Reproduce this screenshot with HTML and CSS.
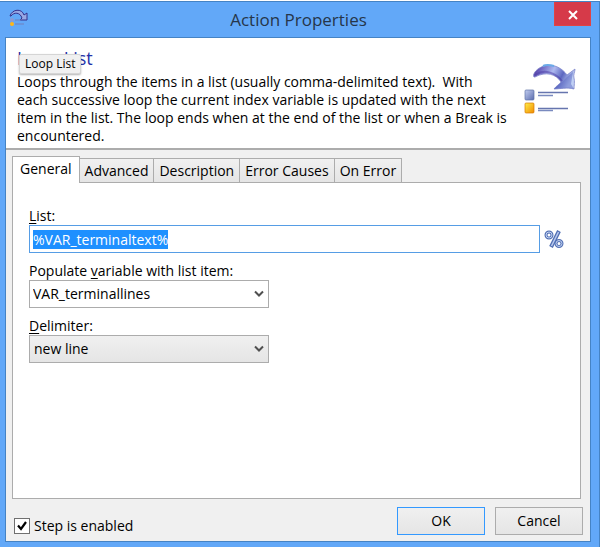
FILE: index.html
```
<!DOCTYPE html>
<html lang="en">
<head>
  <meta charset="UTF-8">
  <meta name="viewport" content="width=device-width, initial-scale=1.0">
  <title>Action Properties</title>
  <link rel="stylesheet" href="styles.css">
</head>
<body>
  <form class="window">
    <header class="titlebar">
      <svg class="title-icon" viewBox="0 0 20 20" aria-hidden="true">
        <path d="M1 8C3 1 13 0 15 7L18 5V12H11L13 10C11 4 5 4 2 8Z" fill="#98a8e4" stroke="#34308c"/>
        <circle cx="3" cy="12" r="2" fill="#8c9ad4"/>
        <circle cx="3" cy="16" r="2" fill="#ffb619"/>
        <path d="M6 12H12M6 16H15" stroke="#7080bd"/>
      </svg>
      <h1 class="title">Action Properties</h1>
      <button type="button" class="close" aria-label="Close">
        <svg viewBox="0 0 10 10" width="10" height="10"><path d="M1 1L9 9M9 1L1 9" stroke="#fff" stroke-width="2"/></svg>
      </button>
    </header>

    <main class="client">
      <section class="intro">
        <div class="intro-text">
          <h2 class="action-name">Loop List<span class="tooltip" role="tooltip">Loop List</span></h2>
          <p>Loops through the items in a list (usually comma-delimited text).&nbsp; With<br>
          each successive loop the current index variable is updated with the next<br>
          item in the list. The loop ends when at the end of the list or when a Break is<br>
          encountered.</p>
        </div>
        <svg class="loop-icon" viewBox="0 0 54 52" aria-hidden="true">
          <defs>
            <linearGradient id="arrow" x1="0" y1="0" x2="1" y2="0.3">
              <stop offset="0" stop-color="#44228e"/>
              <stop offset=".2" stop-color="#6c63c0"/>
              <stop offset=".5" stop-color="#aebaf0"/>
              <stop offset=".75" stop-color="#5c67c0"/>
              <stop offset="1" stop-color="#c0d0f4"/>
            </linearGradient>
            <linearGradient id="blueBox" x1="0" y1="0" x2="1" y2="1">
              <stop offset="0" stop-color="#c3cef0"/>
              <stop offset="1" stop-color="#5a6cae"/>
            </linearGradient>
            <linearGradient id="goldBox" x1="0" y1="0" x2="1" y2="1">
              <stop offset="0" stop-color="#fff04a"/>
              <stop offset="1" stop-color="#f08a00"/>
            </linearGradient>
          </defs>
          <path d="M10 13C8 10 13 4 20 2C30 -1 39 5 43 11L51 5C51 8 49 11 50 14C51 17 50 22 50 25C43 23 36 25 30 25C32 22 36 20 37 18C32 10 22 7 11 13Z" fill="url(#arrow)" stroke="#7f86cc" stroke-width=".8"/>
          <path d="M19 2C23 0 26 1 30 2" fill="none" stroke="#6aaae8" stroke-width="2"/>
          <path d="M11 11C20 5 31 8 38 17" fill="none" stroke="#4a3aa4" stroke-width="2" opacity=".5"/>
          <path d="M30 25L38 18L43 13L49 8L47 20L50 25C43 23 36 25 30 25Z" fill="#5b69c4" opacity=".5"/>
          <rect x="1" y="26" width="9" height="10" rx="1" fill="url(#blueBox)" stroke="#6072a8" stroke-width=".7"/>
          <rect x="1" y="39" width="9" height="10" rx="1" fill="url(#goldBox)" stroke="#d97900" stroke-width=".7"/>
          <path d="M14 28.500H44M14 44.500H44" stroke="#6675ae" stroke-width="1.300"/>
          <path d="M14 31.500H29M14 46.500H29" stroke="#7a8abf" stroke-width="1.300"/>
        </svg>
      </section>

      <section class="body">
        <div class="tabs" role="tablist">
          <button type="button" class="tab active" role="tab" aria-selected="true">General</button>
          <button type="button" class="tab" role="tab">Advanced</button>
          <button type="button" class="tab" role="tab">Description</button>
          <button type="button" class="tab" role="tab">Error Causes</button>
          <button type="button" class="tab" role="tab">On Error</button>
        </div>
        <div class="panel" role="tabpanel">
          <div class="field">
            <label for="list"><u>L</u>ist:</label>
            <div class="list-row">
              <input type="text" id="list" class="control list-input" value="%VAR_terminaltext%" autofocus>
              <button type="button" class="percent" aria-label="Insert variable">
                <svg viewBox="0 0 20 20" width="20" height="20" fill="none" stroke="#5270b4">
                  <path d="M15 2L7 18" stroke-width="4"/>
                  <path d="M14.500 3L7.500 17" stroke="#b9c9ee" stroke-width="1.500"/>
                  <circle cx="5" cy="6" r="3" stroke-width="3"/>
                  <circle cx="5" cy="6" r="3" stroke="#c3d2f2"/>
                  <circle cx="15" cy="14.500" r="3" stroke-width="3"/>
                  <circle cx="15" cy="14.500" r="3" stroke="#c3d2f2"/>
                </svg>
              </button>
            </div>
          </div>
          <div class="field">
            <label for="variable">Populate <u>v</u>ariable with list item:</label>
            <div class="combo">
              <select id="variable" class="control"><option>VAR_terminallines</option></select>
              <svg class="chevron" viewBox="0 0 10 8"><path d="M1 1.500L5 5.500L9 1.500" fill="none" stroke="#505050" stroke-width="2"/></svg>
            </div>
          </div>
          <div class="field">
            <label for="delimiter"><u>D</u>elimiter:</label>
            <div class="combo">
              <select id="delimiter" class="control drop-list"><option>new line</option></select>
              <svg class="chevron" viewBox="0 0 10 8"><path d="M1 1.500L5 5.500L9 1.500" fill="none" stroke="#505050" stroke-width="2"/></svg>
            </div>
          </div>
        </div>
      </section>

      <footer class="footer">
        <label class="enabled"><input type="checkbox" class="check" checked>Step is enabled</label>
        <button type="submit" class="btn btn-default">OK</button>
        <button type="button" class="btn">Cancel</button>
      </footer>
    </main>
  </form>

  <script>
    const list = document.getElementById('list');
    list.focus();
    list.select();
  </script>
</body>
</html>
```
FILE: styles.css
```
:root {
  --frame: #62a8f8;
  --frame-dark: #4583c4;
  --face: #f0f0f0;
  --line: #acacac;
  --focus: #569de5;
}

* {
  margin: 0;
  padding: 0;
  box-sizing: border-box;
}

body {
  min-height: 100vh;
  padding: 1px 2px 2px 0;
  display: flex;
  background: #fff;
  color: #000;
  font: 14px/18px "Open Sans", "Noto Sans", sans-serif;
}

button,
input,
select {
  font: inherit;
  color: inherit;
}

.window {
  flex: 1;
  display: flex;
  flex-direction: column;
  padding: 0 8px 5px 5px;
  background: var(--frame);
  border-top: 1px solid var(--frame-dark);
  border-right: 1px solid var(--frame-dark);
}

/* title bar */
.titlebar {
  height: 35px;
  display: flex;
  align-items: flex-start;
}

.title-icon {
  width: 20px;
  height: 20px;
  margin: 6px 0 0 4px;
}

.title {
  flex: 1;
  padding-left: 14px;
  font-size: 17px;
  font-weight: 400;
  line-height: 35px;
  text-align: center;
  color: #26364a;
}

.close {
  width: 37px;
  height: 24px;
  padding-top: 2px;
  display: flex;
  align-items: center;
  justify-content: center;
  border: 1px solid #e04343;
  border-top: 0;
  background: #d63a49;
}

/* client area */
.client {
  flex: 1;
  display: flex;
  flex-direction: column;
  border: 1px solid var(--frame-dark);
  background: var(--face);
}

.intro {
  display: flex;
  justify-content: space-between;
  padding: 8px 12px 3px 11px;
  background: #fff;
  border-bottom: 2px solid var(--line);
}

.action-name {
  position: relative;
  font-size: 18px;
  font-weight: 400;
  line-height: 24px;
  margin-bottom: 3px;
  color: #2432a8;
}

.tooltip {
  position: absolute;
  left: 2px;
  top: 8px;
  padding: 0 5px;
  border: 1px solid #d5d5d5;
  border-radius: 2px;
  background: #f0f0f0;
  box-shadow: 0 1px 2px rgba(0, 0, 0, 0.3);
  font-size: 12px;
  line-height: 18px;
  color: #000;
}

.intro-text p {
  white-space: nowrap;
}

.loop-icon {
  width: 54px;
  height: 52px;
  margin-top: 18px;
  flex: none;
}

.body {
  flex: 1;
  display: flex;
  flex-direction: column;
  padding: 6px 9px 0 6px;
}

/* tabs */
.tabs {
  display: flex;
  align-items: flex-end;
}

.tab {
  height: 24px;
  padding: 0 5px;
  border: 1px solid var(--line);
  border-left-width: 0;
  border-bottom: 0;
  background: linear-gradient(#f0f0f0, #e5e5e5);
}

.tab.active {
  height: 27px;
  margin-bottom: -1px;
  padding: 0 7px 2px;
  border-left-width: 1px;
  background: #fff;
  z-index: 1;
}

.panel {
  flex: 1;
  display: flex;
  flex-direction: column;
  gap: 9px;
  padding: 24px 16px;
  border: 1px solid var(--line);
  background: #fff;
}

.field {
  display: flex;
  flex-direction: column;
}

.field u {
  text-underline-offset: 2px;
}

.list-row {
  display: flex;
  align-items: center;
  gap: 4px;
}

.control {
  width: 100%;
  height: 28px;
  padding: 0 3px;
  appearance: none;
  border: 1px solid var(--line);
  border-radius: 0;
  background: #fff;
  outline: 0;
}

.list-input {
  flex: 1;
  border-color: var(--focus);
}

.list-input::selection {
  background: #1e90ff;
  color: #fff;
}

.percent {
  width: 20px;
  height: 20px;
  border: 0;
  background: none;
}

.combo {
  position: relative;
  width: 240px;
}

.drop-list {
  padding-left: 4px;
  background: linear-gradient(#f0f0f0, #e5e5e5);
}

.chevron {
  position: absolute;
  right: 5px;
  top: 10px;
  width: 10px;
  height: 8px;
  pointer-events: none;
}

/* footer */
.footer {
  display: flex;
  align-items: center;
  gap: 10px;
  padding: 8px 7px 6px 8px;
}

.enabled {
  margin-right: auto;
  padding-top: 10px;
  display: flex;
  align-items: center;
  gap: 4px;
}

.check {
  width: 16px;
  height: 16px;
  appearance: none;
  border: 1px solid #707070;
  background: #fff url("data:image/svg+xml,%3Csvg xmlns='http://www.w3.org/2000/svg' viewBox='0 0 14 14'%3E%3Cpath d='M3 6.500L6 10L11 3' fill='none' stroke='%23000' stroke-width='2.200'/%3E%3C/svg%3E");
}

.btn {
  width: 88px;
  height: 28px;
  border: 1px solid var(--line);
  background: linear-gradient(#f0f0f0, #e5e5e5);
}

.btn-default {
  border-color: #3399ff;
}
```
